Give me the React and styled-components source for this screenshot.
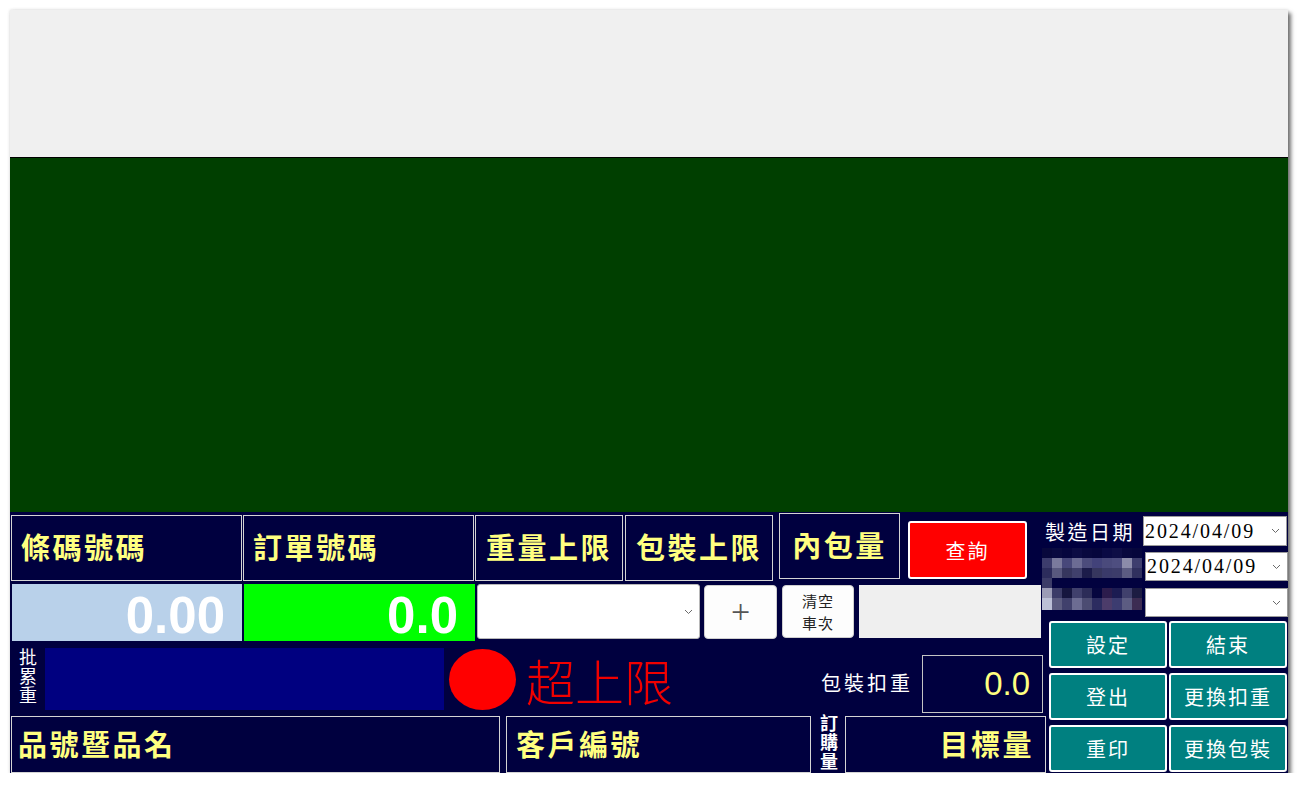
import React from "react";
import styled, { createGlobalStyle } from "styled-components";

const GlobalStyle = createGlobalStyle`
  html, body {
    margin: 0;
    padding: 0;
    background: #ffffff;
  }
  body {
    font-family: "Noto Sans CJK TC", "Noto Sans", sans-serif;
  }
`;

const CJK = `"Noto Sans CJK TC", "Noto Sans CJK SC", sans-serif`;

const Window = styled.div`
  margin: 10px 0 0 10px;
  width: 1278px;
  height: 763px;
  display: flex;
  flex-direction: column;
  box-shadow: 3px 3px 4px rgba(0, 0, 0, 0.55), 0 0 3px rgba(0, 0, 0, 0.15);
`;

const TitleArea = styled.div`
  height: 147px;
  background: #f0f0f0;
  border-bottom: 1px solid #000000;
`;

const Canvas = styled.div`
  height: 354px;
  background: #003f00;
`;

const Panel = styled.div`
  height: 261px;
  display: flex;
  background: #00003f;
  overflow: hidden;
`;

const LeftArea = styled.div`
  width: 1036px;
  padding-left: 1px;
  display: flex;
  flex-direction: column;
  flex-shrink: 0;
`;

const Row = styled.div`
  height: ${(p) => p.$h}px;
  display: flex;
  align-items: flex-start;
`;

const LabelBox = styled.div`
  flex-shrink: 0;
  box-sizing: border-box;
  width: ${(p) => p.$w}px;
  height: ${(p) => p.$h || 66}px;
  margin-left: ${(p) => p.$ml || 0}px;
  margin-top: ${(p) => p.$mt || 0}px;
  border: 1px solid #d4d4d4;
  display: flex;
  align-items: center;
  justify-content: ${(p) => p.$align || "flex-start"};
  padding: 0 ${(p) => p.$pr || 0}px 4px ${(p) => p.$pl || 0}px;
  color: #ffff80;
  font-family: ${CJK};
  font-weight: 700;
  font-size: 29px;
  letter-spacing: 2.5px;
  white-space: nowrap;
`;

const QueryButton = styled.div`
  flex-shrink: 0;
  box-sizing: border-box;
  width: 119px;
  height: 58px;
  margin-left: 8px;
  margin-top: 9px;
  background: #ff0000;
  border: 2px solid #ffffff;
  border-radius: 3px;
  display: flex;
  align-items: center;
  justify-content: center;
  color: #ffffff;
  font-family: ${CJK};
  font-size: 20px;
  letter-spacing: 2px;
`;

const ValueBox = styled.div`
  flex-shrink: 0;
  box-sizing: border-box;
  width: ${(p) => p.$w}px;
  height: 57px;
  margin-left: ${(p) => p.$ml}px;
  margin-top: 2px;
  background: ${(p) => p.$bg};
  display: flex;
  align-items: center;
  justify-content: flex-end;
  padding: 5px 17px 0 0;
  color: #ffffff;
  font-family: "Liberation Sans", Arial, sans-serif;
  font-weight: 700;
  font-size: 51px;
`;

const SelectBox = styled.div`
  flex-shrink: 0;
  box-sizing: border-box;
  width: ${(p) => p.$w}px;
  height: ${(p) => p.$h}px;
  margin-left: ${(p) => p.$ml || 0}px;
  margin-top: ${(p) => p.$mt || 0}px;
  background: #ffffff;
  border: 1px solid ${(p) => p.$border || "#b8b8b8"};
  border-radius: ${(p) => p.$radius || 0}px;
  display: flex;
  align-items: center;
  justify-content: space-between;
  padding: 0 6px 0 1px;
  color: #000000;
  font-family: "Liberation Serif", "Times New Roman", serif;
  font-size: 20px;
  letter-spacing: 1.9px;
`;

const LightButton = styled.div`
  flex-shrink: 0;
  box-sizing: border-box;
  width: ${(p) => p.$w}px;
  height: ${(p) => p.$h}px;
  margin-left: ${(p) => p.$ml}px;
  margin-top: 3px;
  background: #fdfdfd;
  border: 1px solid #cfcfcf;
  border-radius: 4px;
  display: flex;
  flex-direction: column;
  align-items: center;
  justify-content: center;
  text-align: center;
  color: #2a2a2a;
`;

const PlusGlyph = styled.span`
  font-family: "Liberation Serif", serif;
  font-size: 34px;
  font-weight: 300;
  color: #555555;
  line-height: 1;
`;

const StackLine = styled.span`
  display: block;
  font-family: ${CJK};
  font-size: 15px;
  line-height: 22px;
  letter-spacing: 1px;
  color: #222222;
`;

const GreyField = styled.div`
  flex-shrink: 0;
  width: 182px;
  height: 53px;
  margin-left: 5px;
  margin-top: 3px;
  background: #efefef;
`;

const VerticalLabel = styled.div`
  flex-shrink: 0;
  width: ${(p) => p.$w}px;
  margin-left: ${(p) => p.$ml}px;
  margin-top: ${(p) => p.$mt}px;
  writing-mode: vertical-rl;
  text-orientation: upright;
  color: #ffffff;
  font-family: ${CJK};
  font-weight: ${(p) => (p.$bold ? 700 : 400)};
  font-size: 18px;
  line-height: ${(p) => p.$w}px;
  letter-spacing: 1px;
  white-space: nowrap;
`;

const BatchBar = styled.div`
  flex-shrink: 0;
  width: 399px;
  height: 62px;
  margin-left: 7px;
  margin-top: 7px;
  background: #000080;
`;

const Lamp = styled.div`
  flex-shrink: 0;
  width: 67px;
  height: 61px;
  margin-left: 5px;
  margin-top: 8px;
  border-radius: 50%;
  background: #ff0000;
`;

const AlarmText = styled.div`
  flex-shrink: 0;
  margin-left: 10px;
  margin-top: 6px;
  color: #f00000;
  font-family: ${CJK};
  font-weight: 300;
  font-size: 49px;
  line-height: 66px;
  white-space: nowrap;
`;

const SmallLabel = styled.div`
  flex-shrink: 0;
  margin-left: ${(p) => p.$ml}px;
  margin-top: ${(p) => p.$mt}px;
  color: #ffffff;
  font-family: ${CJK};
  font-size: 20px;
  letter-spacing: 3px;
  white-space: nowrap;
`;

const TareBox = styled.div`
  flex-shrink: 0;
  box-sizing: border-box;
  width: 121px;
  height: 58px;
  margin-left: 9px;
  margin-top: 14px;
  border: 1px solid #c4c4c4;
  display: flex;
  align-items: center;
  justify-content: flex-end;
  padding-right: 12px;
  color: #ffff80;
  font-family: "Liberation Sans", Arial, sans-serif;
  font-size: 33px;
`;

const RightArea = styled.div`
  width: 241px;
  flex-shrink: 0;
  display: flex;
  flex-direction: column;
`;

const DateGrid = styled.div`
  margin-left: -5px;
  padding-top: 4px;
  display: grid;
  grid-template-columns: 101px 145px;
  grid-template-rows: 30px 29px 29px;
  row-gap: 6px;
`;

const DateLabel = styled.div`
  padding-left: 3px;
  display: flex;
  align-items: center;
  color: #ffffff;
  font-family: ${CJK};
  font-size: 20px;
  letter-spacing: 2.5px;
  white-space: nowrap;
`;

const MosaicWrap = styled.div`
  grid-column: 1;
  grid-row: 2 / span 2;
  margin-top: -4px;
  height: 62px;
`;

const DateField = styled(SelectBox)`
  justify-self: ${(p) => p.$justify};
  grid-column: 2;
  grid-row: ${(p) => p.$row};
`;

const ButtonGrid = styled.div`
  margin: 5px 0 0 2px;
  display: grid;
  grid-template-columns: 118px 118px;
  grid-auto-rows: 47px;
  column-gap: 2px;
  row-gap: 5px;
`;

const TealButton = styled.div`
  box-sizing: border-box;
  background: #008080;
  border: 2px solid #ffffff;
  border-radius: 3px;
  display: flex;
  align-items: center;
  justify-content: center;
  color: #ffffff;
  font-family: ${CJK};
  font-size: 20px;
  letter-spacing: 2px;
`;

const Chevron = () => (
  <svg width="9" height="6" viewBox="0 0 9 6">
    <path d="M1 1 L4.5 4.5 L8 1" fill="none" stroke="#6a6a6a" strokeWidth="1" />
  </svg>
);

const mosaicRows = [
  ["#08083c", "#0a0a40", "#06063e", "#0c0c44", "#08083e", "#06063c", "#0a0a44", "#0e0e46", "#08083e", "#06063c"],
  ["#3c3c6c", "#7a7a9c", "#48487a", "#6c6c94", "#4c4c7c", "#42427a", "#4a4a7c", "#4e4e80", "#8c8caa", "#3e3e6e"],
  ["#2c2c5c", "#58587e", "#36365e", "#40406c", "#1c1c4a", "#36365e", "#3a3a6a", "#3c3c6a", "#5c5c82", "#30305e"],
  ["#3c3c68", "#02023f", "#02023f", "#02023f", "#02023f", "#02023f", "#02023f", "#02023f", "#02023f", "#02023f"],
  ["#9c9cb6", "#3c3c68", "#16163f", "#40406c", "#2c2c58", "#06063f", "#2c1c4c", "#1c1c52", "#40406c", "#1c1c42"],
  ["#bcc0d6", "#5c5c80", "#40406c", "#6c6c92", "#4c4c72", "#2c2c60", "#4c3c6a", "#3c3c70", "#5c5c82", "#3c2c52"],
];

const Mosaic = () => (
  <svg width="100" height="62" viewBox="0 0 100 62">
    {mosaicRows.map((row, r) =>
      row.map((c, i) => (
        <rect key={`${r}-${i}`} x={i * 10} y={r * 10} width="10" height={r === 5 ? 12 : 10} fill={c} />
      ))
    )}
  </svg>
);

const App = () => {
  return (
    <>
      <GlobalStyle />
      <Window>
        <TitleArea />
        <Canvas />
        <Panel>
          <LeftArea>
            <Row $h={70}>
              <LabelBox $w={231} $mt={3} $pl={9}>條碼號碼</LabelBox>
              <LabelBox $w={231} $mt={3} $ml={1} $pl={9}>訂單號碼</LabelBox>
              <LabelBox $w={148} $mt={3} $ml={1} $align="center">重量上限</LabelBox>
              <LabelBox $w={148} $mt={3} $ml={2} $align="center">包裝上限</LabelBox>
              <LabelBox $w={121} $mt={1} $ml={6} $align="center">內包量</LabelBox>
              <QueryButton>查詢</QueryButton>
            </Row>
            <Row $h={59}>
              <ValueBox $w={230} $ml={1} $bg="#b9d1ea">0.00</ValueBox>
              <ValueBox $w={231} $ml={2} $bg="#00ff00">0.0</ValueBox>
              <SelectBox $w={223} $h={55} $ml={2} $mt={2} $radius={3}>
                <span />
                <Chevron />
              </SelectBox>
              <LightButton $w={73} $h={54} $ml={4}>
                <PlusGlyph>+</PlusGlyph>
              </LightButton>
              <LightButton $w={72} $h={53} $ml={5}>
                <StackLine>清空</StackLine>
                <StackLine>車次</StackLine>
              </LightButton>
              <GreyField />
            </Row>
            <Row $h={75}>
              <VerticalLabel $w={20} $ml={7} $mt={7}>批累重</VerticalLabel>
              <BatchBar />
              <Lamp />
              <AlarmText>超上限</AlarmText>
              <SmallLabel $ml={148} $mt={27}>包裝扣重</SmallLabel>
              <TareBox>0.0</TareBox>
            </Row>
            <Row $h={57}>
              <LabelBox $w={489} $h={57} $pl={6}>品號暨品名</LabelBox>
              <LabelBox $w={305} $h={57} $ml={6} $pl={9}>客戶編號</LabelBox>
              <VerticalLabel $w={18} $ml={9} $mt={-2} $bold>訂購量</VerticalLabel>
              <LabelBox $w={201} $h={57} $ml={7} $align="flex-end" $pr={11}>目標量</LabelBox>
            </Row>
          </LeftArea>
          <RightArea>
            <DateGrid>
              <DateLabel>製造日期</DateLabel>
              <DateField $w={144} $h={30} $border="#9c9c9c" $justify="start" $row={1}>
                <span>2024/04/09</span>
                <Chevron />
              </DateField>
              <MosaicWrap>
                <Mosaic />
              </MosaicWrap>
              <DateField $w={143} $h={29} $border="#9c9c9c" $justify="end" $row={2}>
                <span>2024/04/09</span>
                <Chevron />
              </DateField>
              <DateField $w={143} $h={29} $mt={1} $border="#9c9c9c" $justify="end" $row={3}>
                <span />
                <Chevron />
              </DateField>
            </DateGrid>
            <ButtonGrid>
              <TealButton>設定</TealButton>
              <TealButton>結束</TealButton>
              <TealButton>登出</TealButton>
              <TealButton>更換扣重</TealButton>
              <TealButton>重印</TealButton>
              <TealButton>更換包裝</TealButton>
            </ButtonGrid>
          </RightArea>
        </Panel>
      </Window>
    </>
  );
};

export default App;
